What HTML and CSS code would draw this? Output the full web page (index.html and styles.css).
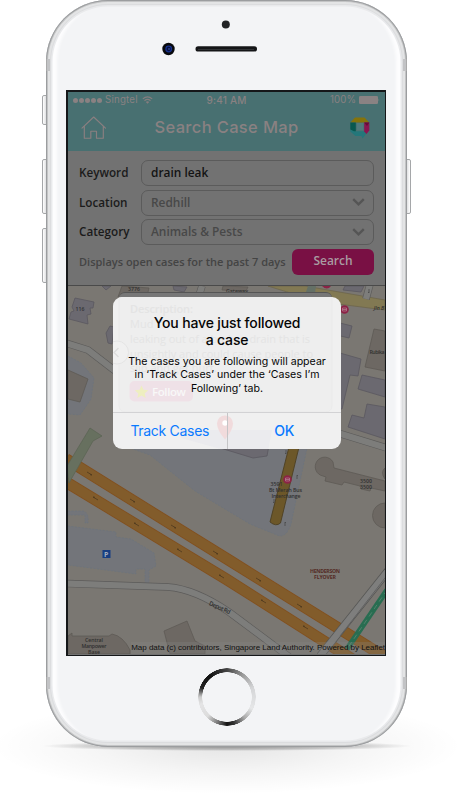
FILE: index.html
```html
<!DOCTYPE html>
<html lang="en">
<head>
<meta charset="utf-8">
<title>Search Case Map</title>
<link rel="stylesheet" href="styles.css">
</head>
<body>
<div class="stage">
  <div class="ground"></div>
  <i class="key key-mute"></i><i class="key key-up"></i><i class="key key-down"></i><i class="key key-power"></i>
  <div class="phone">
    <i class="band tl"></i><i class="band tr"></i><i class="band bl"></i><i class="band br"></i>
    <div class="forehead">
      <svg width="120" height="60" viewBox="150 5 120 60">
        <circle cx="225.800" cy="24.500" r="4" fill="#222325"/>
        <circle cx="168.500" cy="49" r="6.200" fill="#08090d"/>
        <circle cx="168.700" cy="49" r="2.800" fill="#07103f" stroke="#16308c" stroke-width="1.300"/>
        <circle cx="169" cy="49" r=".8" fill="#4464c2"/>
        <rect x="195.500" y="46.300" width="61.500" height="5.200" rx="2.600" fill="#141517"/>
        <path d="M198 49.500H254" stroke="#303235" stroke-width="1"/>
      </svg>
    </div>
    <div class="screen">
      <header class="topbar">
        <div class="status">
          <span class="carrier"><i></i><i></i><i></i><i></i><i></i><span class="net">Singtel</span>
            <svg width="11" height="8" viewBox="0 0 11 8" fill="none" stroke="#857d7e"><path d="M.8 2.900Q5.500-1.200 10.200 2.900M2.500 4.700Q5.500 2.200 8.500 4.700" stroke-width="1.200"/><path d="M3.800 6Q5.500 4.700 7.200 6L5.500 7.800Z" fill="#857d7e" stroke="none"/></svg>
          </span>
          <span class="clock">9:41 AM</span>
          <span class="battery">100% <svg width="21" height="8" viewBox="0 0 21 8" fill="#8a8283"><rect width="19" height="8" rx="1.200"/><path d="M19.600 2.500q1.300 1.500 0 3z"/></svg></span>
        </div>
        <div class="nav">
          <svg width="26" height="23" viewBox="0 0 26 23" fill="none" stroke="#8a7f80" stroke-width="1.150" stroke-linejoin="round" stroke-linecap="round"><path d="M1 12.200 12.700 1 24.500 12.200M3.300 10.300V22.200H9.800V15.200H15.500V22.200H22.300V10.300"/></svg>
          <h1>Search Case Map</h1>
          <svg class="logo" width="20" height="22" viewBox="0 0 20 22"><path d="M5 .5H14.500L19.300 5.500H.3Z" fill="#85730b"/><path d="M.3 5.500H5.800V15.500H4L.3 12.500Z" fill="#09584f"/><path d="M.3 12.500 4 14.200H14L16.500 16.500 12.500 21.500 11.500 19H5.500L.3 14.500Z" fill="#24777a"/><path d="M14.200 5.500H19.300V13.500L16.500 17 14.200 14.500Z" fill="#8a1450"/><path d="M14.200 5.500H19.300L17 9Z" fill="#640d37"/><rect x="6.800" y="6" width="6.600" height="7.400" fill="#527a7b"/></svg>
        </div>
      </header>
      <section class="form">
        <div class="row"><label>Keyword</label><div class="field typed">drain leak</div></div>
        <div class="row"><label>Location</label><div class="field">Redhill<svg width="13" height="9" viewBox="0 0 13 9"><path d="M1.200 1.200 6.500 6.300 11.800 1.200" fill="none" stroke="#555" stroke-width="2.400"/></svg></div></div>
        <div class="row"><label>Category</label><div class="field">Animals &amp; Pests<svg width="13" height="9" viewBox="0 0 13 9"><path d="M1.200 1.200 6.500 6.300 11.800 1.200" fill="none" stroke="#555" stroke-width="2.400"/></svg></div></div>
        <div class="row last"><span class="hint">Displays open cases for the past 7 days</span><div class="search">Search</div></div>
      </section>
      <section class="map">
        <svg width="317" height="368" viewBox="68 287 317 368">
          <rect x="68" y="287" width="317" height="368" fill="#7a7772"/>
          <g fill="#73757a" stroke="#6c747c" stroke-width=".8" stroke-dasharray="2 1.500">
            <path d="M130 449H247L281 440 312 395 307 449 291 525Q286 540 277 536L250 525 195 492 150 456Z"/>
            <path d="M68 527 116 533V538L131 540 154 554 156 567 149 571V586H145V570H136V575L68 566Z"/>
            <path d="M68 512H83Q89 513 88 524H85V516H68"/>
            <path d="M68 357 81 364 94 379 91 400 80 416 68 415Z"/>
          </g>
          <g fill="#6b6970" stroke="#5a5860" stroke-width=".8">
            <path d="M75 299 94 303 93 309 90 309 91 315 87 316 88 325 69 320 71 313 74 312 72 308Z"/>
            <path d="M110 327 114 328 112 345 108 344 106 334ZM102 287H111L106 291Z"/>
            <path d="M173 287 187 288 184 293 174 291ZM332 322 352 327 349 339 328 334ZM333 352 361 360 358 377 350 376 342 410 330 408ZM362 376 385 381V398L358 390ZM367 405 385 408V440L348 428 352 416 364 419Z"/>
            <path d="M181 430 272 430 267 457 253 459 181 437Z"/>
            <path d="M345 287H364L361 293 343 291Z"/>
          </g>
          <g fill="#6d6863" stroke="#5e5a55" stroke-width=".8">
            <path d="M68 371 88 380 80 403 68 400ZM122 287 149 289 146 301 118 298ZM374 330 385 332V372L365 368ZM223 287 248 288 246 292 222 291Z"/>
            <path d="M164 632 187 622 195 642 205 647V655H170Z"/>
            <path d="M68 637 72 634 72 637H109L112 635Q123 637 130 651V655H68Z"/>
            <path d="M333 463A9.500 9.500 0 1 0 323 477L326 478 325 482 342 486 344 483 360 487 361 490 370 492 371 489 385 492V482L334 469Z"/>
            <path d="M385 469Q380 473 385 480ZM385 504A12 12 0 0 0 385 529Z"/>
          </g>
          <path d="M268 287H305L385 301V311L338 305 300 297Z" fill="#827953" stroke="#6d664c" stroke-width=".8"/>
          <path d="M308 287H316L315 294 306 293Z" fill="#647066"/>
          <g fill="none" stroke-linejoin="round">
            <path d="M66 344 88 351 114 371 125 376M338 434 387 449M66 584.500 168 588Q195 590 229 613L292 660M202 287 198 300M366 300 370 285" stroke="#5c5b5a" stroke-width="7.500"/>
            <path d="M66 344 88 351 114 371 125 376M338 434 387 449M66 584.500 168 588Q195 590 229 613L292 660M202 287 198 300M366 300 370 285" stroke="#7d7d7b" stroke-width="6.200"/>
            <path d="M66 460 232 563 388 660M66 483 226 580 352 660" stroke="#82501f" stroke-width="11.500"/>
            <path d="M66 460 232 563 388 660M66 483 226 580 352 660" stroke="#825c2b" stroke-width="9.800"/>
            <path d="M391 568 320 657" stroke="#555554" stroke-width="8"/>
            <path d="M391 568 320 657" stroke="#7e7e7d" stroke-width="6.600"/>
            <path d="M392 570 340 637" stroke="#5b5b5a" stroke-width=".8"/>
            <path d="M387 591 347 650" stroke="#286d51" stroke-width="5.500"/>
            <path d="M387 591 347 650" stroke="#5c8672" stroke-width=".8" stroke-dasharray="5 4"/>
          </g>
          <path d="M291 440H301L280.500 524Q276 528 270 523Z" fill="#6c5729" stroke="#4d4022" stroke-width=".9"/>
          <path d="M90 429 102 437 93 442 69 484 67 467Z" fill="#67705f" stroke="#5a6353" stroke-width=".7"/>
          <g fill="none" stroke="#46331c" stroke-width=".7"><path d="M87 473l5 3-2-.3M130 500l5 3-2-.3M171 526l5 3-2-.3M213 552l5 3-2-.3M256 579l5 3-2-.3M297 605l5 3-2-.3M98 501l-5-3 2 .3M139 527l-5-3 2 .3M182 553l-5-3 2 .3M224 579l-5-3 2 .3M266 604l-5-3 2 .3M308 630l-5-3 2 .3"/></g>
          <g fill="none" stroke="#444" stroke-width=".7"><path d="M286 451v4l-1-1M297 480v-4l1 1M274 500v4l-1-1M285 527v-4l1 1M369 290v4l-1-1"/></g>
          <g fill="#8c2346"><circle cx="287.500" cy="480.500" r="4.300"/><circle cx="344.500" cy="310.500" r="4.300"/><path d="M322 287h9q-4 5-9 0z"/></g>
          <path d="M285.500 479h4v3h-4zm0 1.500h4M342.500 309h4v3h-4zm0 1.500h4" fill="none" stroke="#b58595" stroke-width=".7"/>
          <rect x="102.500" y="551" width="8" height="8" fill="#183f82"/><text x="104" y="557.700" class="parking">P</text>
          <g class="m" text-anchor="middle">
            <text x="80" y="312">116</text><text x="134" y="292">3776</text>
            <text x="276.500" y="486.500">3591</text><text x="285.500" y="493" textLength="33">Bt Merah Bus</text><text x="286" y="499" textLength="29">Interchange</text>
            <text x="366" y="484">3500</text><text x="366" y="490">3500</text><text x="377" y="355" textLength="15">Rubika</text><text x="379" y="311" font-style="italic">Jln B</text><text x="237" y="294">Gateway</text>
            <text x="325" y="574" class="flyover" textLength="30">HENDERSON</text><text x="325" y="580" class="flyover" textLength="22">FLYOVER</text>
            <text x="94" y="643" textLength="18">Central</text><text x="94" y="649" textLength="25">Manpower</text><text x="94" y="654.500">Base</text>
            <text class="road" transform="translate(219 610.500) rotate(24)" textLength="23">Depot Rd</text>
          </g>
        </svg>
        <div class="credit">Map data (c) contributors, Singapore Land Authority. Powered by Leaflet</div>
      </section>
      <div class="popup-edge"></div>
      <div class="alert">
        <svg class="ghost" width="228" height="152" viewBox="113 297 228 152">
          <rect x="119" y="285" width="213" height="127" rx="6" fill="#eeeeee" stroke="#eaeaea"/>
          <circle cx="117" cy="352.500" r="11.500" fill="#f0f0f0" stroke="#e4e4e4"/><path d="M118.500 348l-4.500 4.500 4.500 4.500" fill="none" stroke="#dcdcdc" stroke-width="1.300"/>
          <g class="g"><text x="130" y="313" font-weight="600" textLength="63">Description:</text><text x="130" y="328">Mud</text><text x="130" y="343" textLength="180">leaking out of a broken drain that is</text><text x="130" y="358" textLength="183">unsightly and could cause people to</text><text x="130" y="372">slip and get hurt.</text></g>
          <rect x="129.500" y="381" width="63.500" height="20.500" rx="5" fill="#efe1e7"/>
          <path d="M141.500 385.500l2 4.300 4.800.5-3.600 3.100 1 4.600-4.200-2.400-4.200 2.400 1-4.600-3.600-3.100 4.800-.5z" fill="#eeeec0"/>
          <text x="152" y="395.500" class="follow" textLength="34">Follow</text>
          <path d="M181 430V438L253 458 267 457 272 430Z" fill="#ebebee"/>
          <path d="M225 439.500Q217 430 217 423.500a8 8 0 0 1 16 0Q233 430 225 439.500Z" fill="#f1dbdc"/><circle cx="225" cy="423" r="2.700" fill="#fff"/>
        </svg>
        <div class="message"><h2>You have just followed<br>a case</h2><p>The cases you are following will appear<br>in ‘Track Cases’ under the ‘Cases I’m<br>Following’ tab.</p></div>
        <div class="actions"><span>Track Cases</span><span>OK</span></div>
      </div>
    </div>
    <div class="chin"><div class="home"></div></div>
  </div>
</div>
</body>
</html>
```
FILE: styles.css
```css
* { box-sizing: border-box; }
body { margin: 0; background: #fff; }
.stage { position: relative; width: 467px; height: 800px; overflow: hidden; font-family: Inter, "Liberation Sans", sans-serif; }
.ground { position: absolute; left: 0; top: 690px; width: 467px; height: 110px;
  background: radial-gradient(ellipse 185px 5px at 227px 56px, rgba(0,0,0,.4), rgba(0,0,0,.18) 70%, transparent),
    radial-gradient(ellipse 235px 48px at 227px 56px, rgba(0,0,0,.1), rgba(0,0,0,.04) 55%, transparent); }
.key { position: absolute; width: 6px; border: 1px solid #a5a7a9; background: linear-gradient(90deg, #fff, #d6d7d9); border-radius: 2px 0 0 2px; }
.key-mute { left: 42px; top: 95px; height: 30px; }
.key-up { left: 42px; top: 159px; height: 55px; }
.key-down { left: 42px; top: 228px; height: 55px; }
.key-power { left: 405px; top: 159px; height: 55px; transform: scaleX(-1); }
.phone { position: relative; width: 361px; height: 747px; margin-left: 46px; padding: 0 21px 0 20px; display: flex; flex-direction: column;
  border-radius: 62px; background: #f3f4f6;
  box-shadow: inset 0 0 0 1px #9b9d9f, inset 0 0 0 2px #c3c4c5, inset 0 0 0 4px #e3e4e5, inset 0 0 0 5px #dcdddf, inset 0 0 0 6.5px #e9eaec, inset 11px 0 3px #fdfdfe, inset -11px 0 3px #fdfdfe; }
.band { position: absolute; width: 4px; height: 12px; background: #c2c3c5; border-left: 1px solid #aaa; }
.tl, .bl { left: 0; } .tr, .br { right: 0; transform: scaleX(-1); }
.tl, .tr { top: 59px; } .bl, .br { top: 677px; }
.forehead { height: 90px; padding: 5px 0 0 84px; }
.screen { position: relative; height: 566px; border: solid #151719; border-width: 2px 1.300px 1px 2px; width: 320px; display: flex; flex-direction: column; background: #727272; overflow: hidden; }
.topbar { height: 59px; background: #487071; color: #8a8182; }
.status { height: 16px; padding: 0 5px; display: grid; grid-template-columns: 1fr 60px 1fr; align-items: center; font-size: 9.700px; line-height: 16px; letter-spacing: .1px; }
.carrier { display: flex; align-items: center; gap: 1px; }
.carrier i { width: 5px; height: 5px; border-radius: 50%; background: #8a8182; }
.net { margin: 0 3px 0 2px; letter-spacing: .2px; }
.clock { text-align: center; font-weight: 500; font-size: 10px; letter-spacing: .2px; }
.battery { display: flex; align-items: center; justify-content: flex-end; gap: 3px; }
.nav { height: 42px; padding: 0 15px 4px 13px; display: flex; align-items: center; justify-content: space-between; }
.logo { position: relative; top: 1px; }
h1 { margin: 0; padding-right: 4px; font-size: 16.500px; font-weight: 500; letter-spacing: .35px; line-height: 24px; }
.form { height: 135px; padding: 9px 11px 0; font-family: "Open Sans", sans-serif; font-weight: 600; font-size: 12px; border-bottom: 1px solid #4a4a4a; flex: none; }
.row { display: flex; align-items: center; height: 26px; margin-bottom: 3.600px; }
.row label { width: 62px; padding-bottom: 2px; color: #1b1b1b; font-size: 11.700px; }
.field { flex: 1; height: 26px; padding: 0 8px 2px 9px; display: flex; align-items: center; justify-content: space-between; border: 1px solid #5b5b5b; border-radius: 7px; color: #484848; font-size: 11.900px; }
.field svg { position: relative; top: 1px; }
.typed { color: #141414; }
.last { justify-content: space-between; }
.hint { padding-bottom: 1px; color: #444; font-size: 11px; white-space: nowrap; }
.search { width: 82px; height: 26px; border-radius: 6px; background: #791044; color: #a99ca2; text-align: center; line-height: 24px; }
.map { position: relative; height: 368px; overflow: hidden; }
.map svg { display: block; }
.m { font-family: "Open Sans", sans-serif; font-size: 5.200px; font-weight: 600; fill: #303030; }
.flyover { fill: #542b25; font-weight: 700; }
.road { font-size: 6px; }
.parking { font: 700 7px "Open Sans", sans-serif; fill: #a5adbd; }
.credit { position: absolute; right: 0; bottom: 0; height: 12px; line-height: 12px; font-family: "Liberation Sans", sans-serif; font-size: 8px; letter-spacing: -.025px; color: #111; background: rgba(135,135,135,.25); white-space: nowrap; }
.popup-edge { position: absolute; left: 51px; top: 200px; width: 213px; height: 20px; border-radius: 6px 6px 0 0; background: #777; border-top: 1px solid #555; }
.alert { position: absolute; left: 45px; top: 205px; width: 228px; height: 152px; border-radius: 9px; background: #f0f0f0; overflow: hidden; text-align: center; color: #050505; }
.ghost { position: absolute; left: 0; top: 0; }
.g { font-family: "Open Sans", sans-serif; font-size: 11px; fill: #e4e4e4; }
.follow { font: 600 11.500px "Open Sans", sans-serif; fill: #f8f8f8; }
.message { position: relative; height: 115px; padding-top: 17px; }
h2 { margin: 0; font-size: 14px; line-height: 17.300px; font-weight: 500; letter-spacing: -.15px; }
p { margin: 6.400px 0 0; font-size: 10.600px; line-height: 13.500px; }
.actions { position: relative; height: 37px; border-top: 1px solid #d2d2d4; display: flex; color: #0a7aff; font-size: 14px; line-height: 36px; letter-spacing: -.3px; }
.actions span { flex: 1; }
.actions span + span { border-left: 1px solid #c5c5c7; font-weight: 500; }
.chin { display: flex; justify-content: center; padding: 12px 0 0 1px; }
.home { width: 58px; height: 58px; border-radius: 50%; background: radial-gradient(circle, #f3f4f6 0 24.500px, transparent 25px 28.500px, #f3f4f6 29px), conic-gradient(#444, #999 35deg, #d4d5d7 70deg, #e6e7e8 115deg, #aaa 140deg, #333 165deg, #141414 180deg, #777 200deg, #dcdcdc 225deg, #e4e4e5 255deg, #ccc 270deg, #222 290deg, #111 320deg, #444); }
```
